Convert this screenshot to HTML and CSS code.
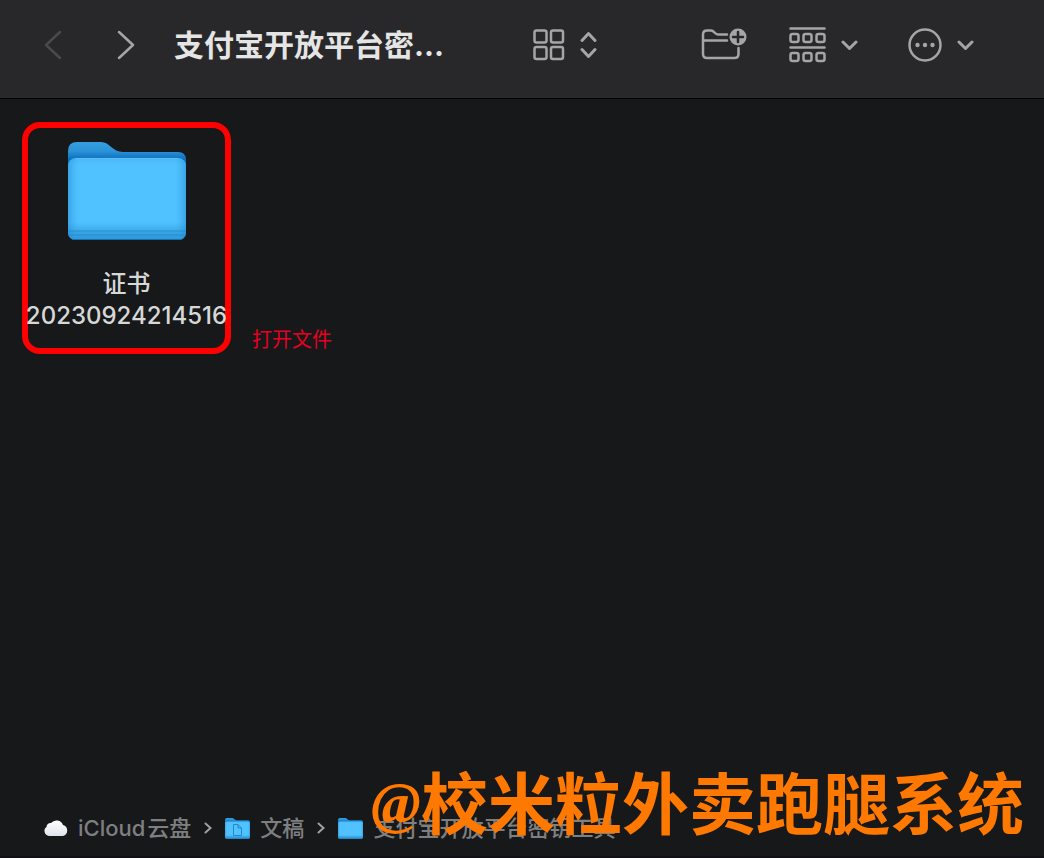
FILE: index.html
```html
<!DOCTYPE html>
<html lang="zh-CN">
<head>
<meta charset="utf-8">
<title>支付宝开放平台密钥工具</title>
<meta name="viewport" content="width=device-width, initial-scale=1">
<link rel="stylesheet" href="styles.css">
</head>
<body>
<svg class="defs" width="0" height="0" aria-hidden="true">
  <defs>
    <linearGradient id="back" x1="0" y1="0" x2="0" y2="1"><stop offset="0" stop-color="#359fe0"/><stop offset=".09" stop-color="#2b94d9"/><stop offset=".18" stop-color="#0d6dbd"/><stop offset="1" stop-color="#1c85d0"/></linearGradient>
    <linearGradient id="front" x1="0" y1="0" x2="0" y2="1"><stop offset="0" stop-color="#48b5f2"/><stop offset=".08" stop-color="#50c2ff"/><stop offset=".78" stop-color="#50c2ff"/><stop offset=".86" stop-color="#43b1f0"/><stop offset=".9" stop-color="#38a5e6"/><stop offset="1" stop-color="#2c98db"/></linearGradient>
    <linearGradient id="side" x1="0" y1="0" x2="1" y2="0"><stop offset="0" stop-color="#238bd2" stop-opacity=".55"/><stop offset=".09" stop-color="#3ba8e8" stop-opacity="0"/><stop offset=".91" stop-color="#3ba8e8" stop-opacity="0"/><stop offset="1" stop-color="#238bd2" stop-opacity=".55"/></linearGradient>
    <linearGradient id="cloud" x1="0" y1="0" x2="0" y2="1"><stop offset="0" stop-color="#ffffff"/><stop offset="1" stop-color="#dfe4ea"/></linearGradient>
    <symbol id="folder" viewBox="0 0 118 99">
      <path fill="url(#back)" d="M0 9Q0 0 9 0H33C42 0 44 10 55 10H110Q118 10 118 18V90Q118 98 110 98H8Q0 98 0 90Z"/>
      <rect y="16" width="118" height="82" rx="8" fill="url(#front)"/>
      <rect y="16" width="118" height="82" rx="8" fill="url(#side)"/>
      <path d="M8 16.5H110" stroke="#5abff5"/>
      <path d="M0 89H118M0 93H118" stroke="#2488cc" stroke-opacity=".7"/>
      <path d="M5 97.5H113" stroke="#176fae"/>
    </symbol>
  </defs>
</svg>

<div class="window">
  <header class="toolbar">
    <button class="tool tool-off" aria-label="后退" disabled><svg width="18" height="30" viewBox="0 0 18 30"><path d="M16 2 2 15 16 28"/></svg></button>
    <button class="tool tool-next" aria-label="前进"><svg width="18" height="30" viewBox="0 0 18 30"><path d="M2 2 16 15 2 28"/></svg></button>
    <h1 class="title">支付宝开放平台密...</h1>
    <div class="tools">
      <button class="tool" aria-label="显示方式">
        <svg width="32" height="32" viewBox="0 0 32 32"><rect x="1.500" y="1.500" width="12" height="12" rx="2"/><rect x="18" y="1.500" width="12" height="12" rx="2"/><rect x="1.500" y="18" width="12" height="12" rx="2"/><rect x="18" y="18" width="12" height="12" rx="2"/></svg>
        <svg class="thick" width="17" height="28" viewBox="0 0 17 28"><path d="M2 9.500 8.500 2.500 15 9.500M2 18.500 8.500 25.500 15 18.500"/></svg>
      </button>
      <button class="tool tool-new" aria-label="新建文件夹">
        <svg width="46" height="34" viewBox="0 0 46 34"><path d="M26 6.500H17C13.500 6.500 13.500 2.500 10 2.500H6Q2 2.500 2 6.500V26Q2 30 6 30H33.500Q37.500 30 37.500 26V20M2 12.500H26"/><circle class="solid" cx="37" cy="9" r="8.500"/><path class="cut" d="M37 4V14M32 9H42"/></svg>
      </button>
      <button class="tool" aria-label="分组">
        <svg width="37" height="36" viewBox="0 0 37 36"><path d="M1.500 1.500H35.500M1.500 20.500H35.500"/><rect x="1.500" y="7" width="8" height="8" rx="2"/><rect x="14.500" y="7" width="8" height="8" rx="2"/><rect x="27.500" y="7" width="8" height="8" rx="2"/><rect x="1.500" y="26" width="8" height="8" rx="2"/><rect x="14.500" y="26" width="8" height="8" rx="2"/><rect x="27.500" y="26" width="8" height="8" rx="2"/></svg>
        <svg class="thick" width="17" height="12" viewBox="0 0 17 12"><path d="M2 3 8.500 9.500 15 3"/></svg>
      </button>
      <button class="tool tool-more" aria-label="更多">
        <svg width="34" height="34" viewBox="0 0 34 34"><circle cx="17" cy="17" r="15.500"/><circle class="solid" cx="9.500" cy="17" r="2.200"/><circle class="solid" cx="17" cy="17" r="2.200"/><circle class="solid" cx="24.500" cy="17" r="2.200"/></svg>
        <svg class="thick" width="17" height="12" viewBox="0 0 17 12"><path d="M2 3 8.500 9.500 15 3"/></svg>
      </button>
    </div>
  </header>

  <main class="files">
    <figure class="file">
      <svg class="file-icon" viewBox="0 0 118 99"><use href="#folder"/></svg>
      <figcaption class="file-name"><span>证书</span><span>20230924214516</span></figcaption>
    </figure>
    <p class="note">打开文件</p>
  </main>

  <footer class="footer">
    <nav class="path" aria-label="路径">
      <a class="crumb" href="#"><svg width="25" height="18" viewBox="0 0 25 18"><path fill="url(#cloud)" d="M6 17A5 5 0 0 1 3.500 8A4 4 0 0 1 8 4A7 7 0 0 1 20 6A5.700 5.700 0 0 1 20 17Z"/></svg><span class="label"><span>iCloud</span><span>云盘</span></span></a>
      <svg class="sep" width="8" height="12" viewBox="0 0 8 12"><path d="M1.500 1.500 6.500 6 1.500 10.500"/></svg>
      <a class="crumb" href="#"><svg width="25" height="23" viewBox="0 0 25 23"><use href="#folder" width="25" height="23"/><path fill="none" stroke="#2388cb" d="M8.500 7.500H13L16.500 11V18.500H8.500ZM13 7.500V11H16.500"/></svg><span>文稿</span></a>
      <svg class="sep" width="8" height="12" viewBox="0 0 8 12"><path d="M1.500 1.500 6.500 6 1.500 10.500"/></svg>
      <a class="crumb" href="#"><svg width="25" height="23" viewBox="0 0 25 23"><use href="#folder" width="25" height="23"/></svg><span>支付宝开放平台密钥工具</span></a>
    </nav>
    <div class="watermark"><span class="at">@</span>校米粒外卖跑腿系统</div>
  </footer>
</div>
</body>
</html>
```
FILE: styles.css
```css
* { box-sizing: border-box; }

body {
  margin: 0;
  background: #17181a;
  color: #d6d7d7;
  font-family: Inter, "Noto Sans CJK SC", sans-serif;
}

.defs { position: absolute; }

.window {
  display: flex;
  flex-direction: column;
  min-height: 100vh;
}

.toolbar {
  display: flex;
  align-items: center;
  padding: 0 70px 8px 44px;
  height: 99px;
  background: #28282a;
  border-bottom: 1px solid #000;
}

.tool {
  display: flex;
  align-items: center;
  gap: 15px;
  padding: 0;
  border: 0;
  background: none;
  color: #a5a5a7;
}

.tool svg {
  display: block;
  fill: none;
  stroke: currentColor;
  stroke-width: 2.5;
  stroke-linecap: round;
  stroke-linejoin: round;
}

.tool .thick { stroke-width: 3; }
.tool .solid { fill: currentColor; stroke: none; }
.tool .cut { stroke: #28282a; }
.tool-off { color: #4a4a4c; }
.tool-next { margin-left: 55px; }

.title {
  flex: 1;
  margin: 0 0 0 39px;
  color: #e5e5e5;
  font-size: 30px;
  font-weight: 700;
  line-height: 44px;
  white-space: nowrap;
}

.tools { display: flex; align-items: center; }
.tool-new { margin: 0 42px 0 104px; }
.tool-more { margin-left: 50px; }

.files {
  flex: 1;
  display: flex;
  align-items: flex-start;
  padding: 23px 22px;
}

.file {
  display: flex;
  flex-direction: column;
  align-items: center;
  width: 209px;
  height: 232px;
  margin: 0;
  padding-top: 14px;
  border: 6px solid #f00;
  border-radius: 18px;
}

.file-icon { width: 118px; height: 99px; }

.file-name {
  display: flex;
  flex-direction: column;
  align-items: center;
  margin-top: 27px;
  font-size: 24px;
  font-weight: 500;
  line-height: 32px;
  white-space: nowrap;
}

.note {
  margin: 203px 0 0 21px;
  color: #e60022;
  font-size: 20px;
  line-height: 30px;
}

.footer {
  position: relative;
  padding: 0 43px 13px;
  border-bottom: 2px solid #121014;
}

.path {
  display: flex;
  align-items: center;
  gap: 13px;
  color: #7e7f80;
  font-size: 22px;
  font-weight: 500;
  line-height: 30px;
  white-space: nowrap;
}

.crumb {
  display: flex;
  align-items: center;
  gap: 10px;
  color: inherit;
  text-decoration: none;
}

.label { display: flex; gap: 2px; }

.sep { fill: none; stroke: #a0a0a2; stroke-width: 2; stroke-linecap: round; }

.watermark {
  position: absolute;
  right: 20px;
  bottom: 0;
  color: #ff7800;
  font-family: "Liberation Serif", "Noto Sans CJK SC", sans-serif;
  font-size: 67px;
  font-weight: 700;
  line-height: 100px;
  white-space: nowrap;
  pointer-events: none;
}

.at {
  font-size: 60px;
  font-style: italic;
  line-height: 60px;
  vertical-align: 6px;
}
```
